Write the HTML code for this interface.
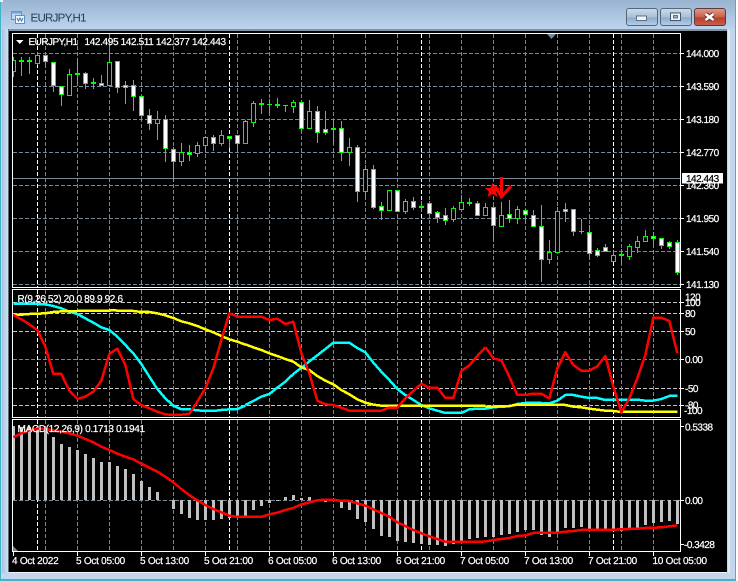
<!DOCTYPE html>
<html><head><meta charset="utf-8"><title>EURJPY,H1</title>
<style>
html,body{margin:0;padding:0;background:#fff;width:738px;height:581px;overflow:hidden}
svg{display:block}
text{font-family:"Liberation Sans",sans-serif;font-size:10px;fill:#fff;stroke:#fff;stroke-width:.22px;letter-spacing:-.5px;text-rendering:geometricPrecision}
</style></head><body>
<svg width="738" height="581" viewBox="0 0 738 581" xmlns="http://www.w3.org/2000/svg">
<defs>
<linearGradient id="t" x1="0" y1="0" x2="0" y2="1"><stop offset="0" stop-color="#99b4d1"/><stop offset="1" stop-color="#bcd3ed"/></linearGradient>
<linearGradient id="l" x1="0" y1="0" x2="1" y2="0"><stop offset="0" stop-color="#a8c3e3"/><stop offset="1" stop-color="#d3e1f1"/></linearGradient>
<linearGradient id="b" x1="0" y1="0" x2="0" y2="1"><stop offset="0" stop-color="#cfdcea"/><stop offset=".5" stop-color="#a9c0d8"/><stop offset=".55" stop-color="#90abc8"/><stop offset="1" stop-color="#b3cfec"/></linearGradient>
<linearGradient id="c" x1="0" y1="0" x2="0" y2="1"><stop offset="0" stop-color="#e09a8c"/><stop offset=".5" stop-color="#c9604e"/><stop offset=".55" stop-color="#b83e2c"/><stop offset="1" stop-color="#c9604e"/></linearGradient>
</defs>
<!-- frame -->
<rect x="0" y="0" width="736" height="581" fill="#c3d6ed"/>
<rect x="0" y="0" width="736" height="29" fill="url(#t)"/>
<rect x="2" y="29" width="6" height="544" fill="url(#l)"/>
<rect x="0" y="0" width="1" height="581" fill="#3fb4c6"/>
<rect x="735" y="0" width="1" height="581" fill="#3fb4c6"/>
<rect x="0" y="579" width="736" height="2" fill="#3fb4c6"/>
<rect x="728" y="30" width="2" height="543" fill="#dfe9f5"/>
<rect x="0" y="0" width="3" height="2" fill="#eef3f8"/>
<rect x="9" y="29" width="718" height="2" fill="#85929f"/>
<rect x="9" y="572" width="718" height="1" fill="#eef3f9"/>
<rect x="8" y="29" width="1" height="543" fill="#5b6b7c"/>
<rect x="9" y="31" width="718" height="541" fill="#000"/>

<!-- title icon -->
<rect x="11.5" y="11.5" width="10" height="8" fill="#bcd7f2" stroke="#5c8fc4"/>
<rect x="11.5" y="11.5" width="10" height="2" fill="#6ea3d8"/>
<rect x="15.5" y="15.5" width="9" height="8" fill="#f2f7fc" stroke="#5c8fc4"/>
<path d="M17 18l1.5 3 1.5-3 1.5 3 1.5-3" fill="none" stroke="#3e78b8" stroke-width="1"/>
<text x="30.5" y="21.5" style="font-size:11.5px;fill:#1f3a57;stroke:none;letter-spacing:-.72px">EURJPY,H1</text>

<!-- buttons -->
<rect x="626.5" y="8.5" width="31" height="17" rx="2.5" fill="url(#b)" stroke="#55677a"/>
<rect x="636.5" y="16" width="10" height="4.5" fill="#eef3f8" stroke="#45586c" stroke-width=".8"/>
<rect x="660.5" y="8.5" width="31" height="17" rx="2.5" fill="url(#b)" stroke="#55677a"/>
<rect x="670.5" y="13" width="10" height="7.5" fill="#eef3f8" stroke="#45586c"/>
<rect x="673.5" y="15.5" width="4" height="2.5" fill="#9db3c8" stroke="#45586c" stroke-width=".8"/>
<rect x="694.5" y="8.5" width="31" height="17" rx="2.5" fill="url(#c)" stroke="#5c3a3c"/>
<path d="M705.5 14l8 6M713.5 14l-8 6" stroke="#5f2f2c" stroke-width="4.4" fill="none"/>
<path d="M705.5 14l8 6M713.5 14l-8 6" stroke="#fff" stroke-width="2.6" fill="none"/>

<!-- grid -->
<g shape-rendering="crispEdges" fill="none" stroke-dasharray="4 2" stroke-width="1">
<path stroke="#778899" d="M13 53.5H680M13 86.5H680M13 119.5H680M13 152.5H680M13 185.5H680M13 218.5H680M13 251.5H680M13 284.5H680M13 359.5H680M13 500.5H680"/>
<path stroke="#c4c8cc" d="M13 302.5H680M13 313.5H680M13 331.5H680M13 388.5H680M13 405.5H680"/>
<path stroke="#778899" d="M45.5 34V287M77.5 34V287M109.5 34V287M141.5 34V287M173.5 34V287M205.5 34V287M237.5 34V287M269.5 34V287M301.5 34V287M333.5 34V287M365.5 34V287M397.5 34V287M429.5 34V287M461.5 34V287M493.5 34V287M525.5 34V287M557.5 34V287M589.5 34V287M621.5 34V287M653.5 34V287
M45.5 290V417M77.5 290V417M109.5 290V417M141.5 290V417M173.5 290V417M205.5 290V417M237.5 290V417M269.5 290V417M301.5 290V417M333.5 290V417M365.5 290V417M397.5 290V417M429.5 290V417M461.5 290V417M493.5 290V417M525.5 290V417M557.5 290V417M589.5 290V417M621.5 290V417M653.5 290V417
M45.5 420V551M77.5 420V551M109.5 420V551M141.5 420V551M173.5 420V551M205.5 420V551M237.5 420V551M269.5 420V551M301.5 420V551M333.5 420V551M365.5 420V551M397.5 420V551M429.5 420V551M461.5 420V551M493.5 420V551M525.5 420V551M557.5 420V551M589.5 420V551M621.5 420V551M653.5 420V551"/>
<path stroke="#fff" d="M37.5 34V287M229.5 34V287M421.5 34V287M613.5 34V287M37.5 290V417M229.5 290V417M421.5 290V417M613.5 290V417M37.5 420V551M229.5 420V551M421.5 420V551M613.5 420V551"/>
</g>
<!-- current price line -->
<rect x="13" y="178" width="667" height="1" fill="#778899"/>

<!-- candle wicks -->
<path shape-rendering="crispEdges" fill="none" stroke="#00ff00" stroke-width="1" d="M13.5 57V77M21.5 57V76M29.5 57V74M37.5 52V65M45.5 55V66M53.5 62V92M61.5 86V106M69.5 69V96M77.5 58V83M85.5 72V89M93.5 78V89M101.5 75V85M109.5 45V85M117.5 61V93M125.5 81V104M133.5 80V111M141.5 96V121M149.5 109V130M157.5 111V140M165.5 115V162M173.5 147V181M181.5 143V166M189.5 145V161M197.5 142V157M205.5 137V152M213.5 135V151M221.5 130V146M229.5 136V148M237.5 135V149M245.5 120V143M253.5 101V127M261.5 99V114M269.5 99V113M277.5 98V108M285.5 105V112M293.5 100V113M301.5 102V132M309.5 100V128M317.5 106V143M325.5 111V135M333.5 121V144M341.5 121V161M349.5 138V166M357.5 145V202M365.5 165V197M373.5 165V209M381.5 202V220M389.5 190V211M397.5 190V212M405.5 199V214M413.5 197V210M421.5 201V212M429.5 201V215M437.5 211V223M445.5 208V225M453.5 206V222M461.5 195V210M469.5 198V206M477.5 201V215M485.5 203V215M493.5 206V242M501.5 202V227M509.5 200V223M517.5 206V224M525.5 210V224M533.5 210V227M541.5 205V282M549.5 240V264M557.5 207V252M565.5 203V222M573.5 209V236M581.5 219V234M589.5 225V258M597.5 248V257M605.5 244V252M613.5 250V261M621.5 249V263M629.5 244V260M637.5 236V253M645.5 230V241M653.5 232V246M661.5 238V249M669.5 241V249M677.5 240V275"/>
<!-- doji bars -->
<path shape-rendering="crispEdges" fill="none" stroke="#00ff00" stroke-width="2" d="M19 61H24M27 61H32M75 74H80M91 83H96M259 104H264M275 105H280M331 129H336M419 207H424M467 203H472M619 255H624"/>
<path shape-rendering="crispEdges" fill="none" stroke="#00ff00" stroke-width="1" d="M267 104.5H272M283 105.5H288M579 231.5H584"/>
<!-- hollow bodies -->
<path shape-rendering="crispEdges" fill="#000" stroke="#00ff00" stroke-width="1" d="M11.5 60.5h4v11h-4zM35.5 55.5h4v8h-4zM67.5 74.5h4v21h-4zM107.5 62.5h4v23h-4zM155.5 119.5h4v4h-4zM179.5 152.5h4v9h-4zM195.5 145.5h4v8h-4zM203.5 137.5h4v8h-4zM219.5 135.5h4v8h-4zM243.5 121.5h4v22h-4zM251.5 103.5h4v19h-4zM291.5 102.5h4v4h-4zM307.5 111.5h4v17h-4zM347.5 147.5h4v5h-4zM363.5 169.5h4v22h-4zM387.5 190.5h4v20h-4zM403.5 201.5h4v10h-4zM451.5 208.5h4v11h-4zM459.5 202.5h4v7h-4zM483.5 207.5h4v8h-4zM499.5 215.5h4v11h-4zM515.5 209.5h4v9h-4zM547.5 252.5h4v7h-4zM555.5 211.5h4v41h-4zM611.5 255.5h4v6h-4zM627.5 246.5h4v10h-4zM635.5 241.5h4v6h-4zM643.5 236.5h4v5h-4z"/>
<!-- filled bodies -->
<path shape-rendering="crispEdges" fill="#fff" stroke="#00ff00" stroke-width="1" d="M43.5 55.5h4v6h-4zM51.5 62.5h4v23h-4zM59.5 86.5h4v8h-4zM83.5 73.5h4v10h-4zM99.5 83.5h4v2h-4zM115.5 61.5h4v26h-4zM123.5 85.5h4v2h-4zM131.5 85.5h4v11h-4zM139.5 96.5h4v19h-4zM147.5 115.5h4v8h-4zM163.5 119.5h4v29h-4zM171.5 149.5h4v12h-4zM187.5 152.5h4v2h-4zM211.5 137.5h4v6h-4zM227.5 136.5h4v2h-4zM235.5 135.5h4v8h-4zM299.5 102.5h4v26h-4zM315.5 111.5h4v21h-4zM323.5 129.5h4v3h-4zM339.5 128.5h4v24h-4zM355.5 147.5h4v44h-4zM371.5 169.5h4v38h-4zM379.5 206.5h4v4h-4zM395.5 190.5h4v21h-4zM411.5 201.5h4v6h-4zM427.5 203.5h4v10h-4zM435.5 212.5h4v5h-4zM443.5 215.5h4v5h-4zM475.5 203.5h4v12h-4zM491.5 207.5h4v18h-4zM507.5 214.5h4v4h-4zM523.5 210.5h4v4h-4zM531.5 215.5h4v11h-4zM539.5 226.5h4v33h-4zM563.5 209.5h4v2h-4zM571.5 209.5h4v22h-4zM587.5 232.5h4v21h-4zM595.5 250.5h4v5h-4zM603.5 247.5h4v4h-4zM651.5 236.5h4v2h-4zM659.5 238.5h4v7h-4zM667.5 242.5h4v4h-4zM675.5 242.5h4v30h-4z"/>

<!-- red arrow + star -->
<path d="M501.5 177V196M495 186L501.5 197L511 186" fill="none" stroke="#ff0000" stroke-width="3"/>
<polygon fill="#ff0000" points="492.5,183 494.5,188 500,188 496,191.5 497.5,197 492.5,194 487.5,197 489,191.5 485,188 490.5,188"/>

<!-- MACD histogram -->
<path shape-rendering="crispEdges" fill="none" stroke="#c0c0c0" stroke-width="3" d="M13.5 426V500M21.5 427V500M29.5 427V500M37.5 427V500M45.5 428V500M53.5 437V500M61.5 444V500M69.5 447V500M77.5 450V500M85.5 454V500M93.5 458V500M101.5 462V500M109.5 462V500M117.5 466V500M125.5 469V500M133.5 474V500M141.5 481V500M149.5 487V500M157.5 492V500M285.5 497V500M293.5 495V500M301.5 498V500M309.5 497V500M173.5 500V509M181.5 500V514M189.5 500V518M197.5 500V520M205.5 500V520M213.5 500V520M221.5 500V519M229.5 500V518M237.5 500V517M245.5 500V516M253.5 500V510M261.5 500V506M269.5 500V503M277.5 500V501M325.5 500V502M341.5 500V508M349.5 500V510M357.5 500V519M365.5 500V522M373.5 500V529M381.5 500V536M389.5 500V537M397.5 500V541M405.5 500V542M413.5 500V543M421.5 500V544M429.5 500V545M437.5 500V545M445.5 500V546M453.5 500V544M461.5 500V543M469.5 500V539M477.5 500V538M485.5 500V537M493.5 500V537M501.5 500V535M509.5 500V534M517.5 500V532M525.5 500V530M533.5 500V530M541.5 500V535M549.5 500V537M557.5 500V533M565.5 500V528M573.5 500V528M581.5 500V527M589.5 500V529M597.5 500V530M605.5 500V530M613.5 500V530M621.5 500V531M629.5 500V528M637.5 500V528M645.5 500V525M653.5 500V523M661.5 500V522M669.5 500V521M677.5 500V524"/>

<!-- indicator lines (cyan, yellow, red) -->
<g fill="none" stroke-width="7.5" shape-rendering="crispEdges" stroke-linejoin="round">
<g transform="translate(0,290) scale(.33333)">
<path stroke="#00ffff" d="M40 42L64 42 88 42 112 42 136 43 160 48 184 55 208 65 232 72 256 85 280 98 304 112 328 120 352 140 376 165 400 190 424 222 448 260 472 297 496 325 520 347 544 358 568 358 592 361 616 363 640 363 664 360 688 358 712 357 736 347"/>
<path stroke="#ffff00" d="M40 75L64 74 88 72 112 71 136 70 160 66 184 64 208 64 232 63 256 63 280 63 304 63 328 62 340 60 352 62 376 63 400 63 424 66 448 66 472 70 496 76 520 84 544 94 568 100 592 108 616 118 640 127 664 138 688 148 712 155 736 164"/>
<path stroke="#ff0000" d="M40 75L64 88 88 103 112 120 136 170 160 252 184 252 208 302 232 327 256 320 280 305 304 272 328 192 352 176 376 225 400 327 424 345 448 355 472 365 496 373 520 375 544 374 568 371 592 335 616 295 640 235 664 150 688 70 712 80 736 80"/>
</g>
<g transform="translate(240,290) scale(.33333)">
<path stroke="#00ffff" d="M16 345L40 333 64 320 88 312 112 293 136 275 160 252 184 234 208 214 232 196 256 177 280 158 304 158 328 158 352 174 376 187 400 218 424 245 448 270 472 297 496 315 520 330 544 345 568 355 592 362 616 369 640 369 664 369 688 358 712 356 736 356"/>
<path stroke="#ffff00" d="M16 163L40 172 64 180 88 190 112 198 136 207 160 215 184 232 208 240 232 258 256 272 280 283 304 300 328 313 352 328 376 338 400 344 424 347 448 348 736 348"/>
<path stroke="#ff0000" d="M16 80L40 80 64 80 88 90 112 86 136 102 160 95 184 190 208 250 232 332 256 343 280 345 304 353 328 362 352 362 376 362 400 362 424 362 448 353 472 353 496 325 520 303 544 281 568 294 592 293 616 324 640 324 664 243 688 226 712 198 736 172"/>
</g>
<g transform="translate(488,290) scale(.33333)">
<path stroke="#00ffff" d="M-8 356L16 352 40 350 64 349 88 342 112 339 136 339 160 339 184 340 208 332 232 315 256 315 280 320 304 324 328 324 352 330 376 330 400 330 424 329 448 329 472 332 496 332 520 327 544 318 568 318"/>
<path stroke="#ffff00" d="M-8 350L16 350 40 349 64 348 88 344 112 344 136 344 160 344 184 344 208 344 232 345 256 350 280 352 304 356 328 359 352 362 376 363 400 366 568 366"/>
<path stroke="#ff0000" d="M-8 172L0 182 16 205 40 211 64 260 88 315 112 315 136 311 160 311 184 325 208 235 232 187 256 225 280 242 304 242 328 229 352 198 376 290 400 367 424 325 448 265 472 195 496 83 520 83 544 93 568 190"/>
</g>
<!-- MACD signal -->
<g transform="translate(0,415) scale(.33333)">
<path stroke="#ff0000" d="M40 67L64 55 88 46 112 42 136 42 160 46 184 50 208 55 232 62 256 72 280 82 304 95 328 105 352 116 376 125 400 133 424 146 448 158 472 170 496 185 520 202 544 222 568 240 592 256 616 270 640 282 664 292 688 302 712 306 736 306"/>
</g>
<g transform="translate(240,415) scale(.33333)">
<path stroke="#ff0000" d="M16 306L40 306 64 306 88 298 112 293 136 285 160 279 184 268 208 262 232 256 256 254 280 254 304 258 328 258 352 265 376 272 400 283 424 294 448 305 472 322 496 333 520 345 544 355 568 364 592 372 616 380 640 381 664 381 688 381 712 381 736 379"/>
</g>
<g transform="translate(488,415) scale(.33333)">
<path stroke="#ff0000" d="M-8 379L0 378 16 375 40 372 64 369 88 363 112 361 136 354 160 353 184 353 208 353 232 350 256 348 280 345 304 344 328 344 352 344 376 344 400 343 424 342 448 341 472 339 496 338 520 337 544 334 568 331"/>
</g>
</g>

<!-- left cover + panel borders -->
<rect x="9" y="31" width="3" height="541" fill="#000"/>
<g fill="none" stroke="#fff" stroke-width="1" shape-rendering="crispEdges">
<rect x="12.5" y="33.5" width="668" height="254"/>
<rect x="12.5" y="289.5" width="668" height="128"/>
<rect x="12.5" y="419.5" width="668" height="132"/>
<!-- ticks -->
<path d="M681 53.5H684M681 86.5H684M681 119.5H684M681 152.5H684M681 185.5H684M681 218.5H684M681 251.5H684M681 284.5H684M681 302.5H684M681 313.5H684M681 331.5H684M681 359.5H684M681 388.5H684M681 405.5H684M681 426.5H684M681 500.5H684M681 544.5H684"/>
<path d="M13.5 552V556M77.5 552V556M141.5 552V556M205.5 552V556M269.5 552V556M333.5 552V556M397.5 552V556M461.5 552V556M525.5 552V556M589.5 552V556M653.5 552V556"/>
</g>
<polygon points="547,34 556,34 551.5,39" fill="#778899"/>
<polygon points="13,546 18,551 13,551" fill="#778899"/>

<!-- chart header -->
<polygon points="16,40 23.5,40 19.75,44" fill="#fff"/>
<text x="28.5" y="45" textLength="49" lengthAdjust="spacing">EURJPY,H1</text>
<text x="84.5" y="45" textLength="141" lengthAdjust="spacing">142.495 142.511 142.377 142.443</text>
<text x="17.5" y="302" textLength="105" lengthAdjust="spacing">R(9,26,52) 20.0 89.9 92.6</text>
<text x="17.5" y="432" textLength="127" lengthAdjust="spacing">MACD(12,26,9) 0.1713 0.1941</text>

<!-- price axis -->
<text x="686" y="57">144.000</text>
<text x="686" y="90">143.590</text>
<text x="686" y="123">143.180</text>
<text x="686" y="156">142.770</text>
<text x="686" y="189">142.360</text>
<text x="686" y="222">141.950</text>
<text x="686" y="255">141.540</text>
<text x="686" y="288">141.130</text>
<rect x="682" y="173" width="41" height="10.5" fill="#fff"/>
<text x="686" y="182" style="fill:#000;stroke:#000">142.443</text>

<!-- indicator axis -->
<text x="685" y="300.5">120</text>
<text x="685" y="306">100</text>
<text x="685" y="317">80</text>
<text x="685" y="335">50</text>
<text x="685" y="363">0.00</text>
<text x="685" y="392">-50</text>
<text x="685" y="408.5">-80</text>
<text x="684" y="414">-100</text>

<!-- macd axis -->
<text x="685" y="430.5">0.5338</text>
<text x="685" y="504">0.00</text>
<text x="684" y="548">-0.3428</text>

<!-- time axis -->
<text x="12" y="564" style="letter-spacing:-.25px">4 Oct 2022</text>
<text x="76" y="564" style="letter-spacing:-.25px">5 Oct 05:00</text>
<text x="140" y="564" style="letter-spacing:-.25px">5 Oct 13:00</text>
<text x="204" y="564" style="letter-spacing:-.25px">5 Oct 21:00</text>
<text x="268" y="564" style="letter-spacing:-.25px">6 Oct 05:00</text>
<text x="332" y="564" style="letter-spacing:-.25px">6 Oct 13:00</text>
<text x="396" y="564" style="letter-spacing:-.25px">6 Oct 21:00</text>
<text x="460" y="564" style="letter-spacing:-.25px">7 Oct 05:00</text>
<text x="524" y="564" style="letter-spacing:-.25px">7 Oct 13:00</text>
<text x="588" y="564" style="letter-spacing:-.25px">7 Oct 21:00</text>
<text x="652.5" y="564" style="letter-spacing:-.25px">10 Oct 05:00</text>
</svg>
</body></html>
